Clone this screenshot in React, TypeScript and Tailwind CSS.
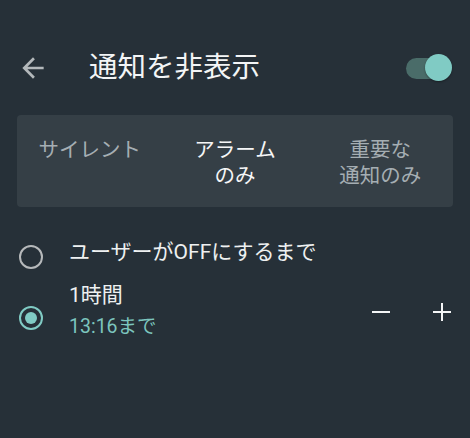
import React from "react";

const font = { fontFamily: "Roboto, 'Noto Sans CJK JP', sans-serif" };

function BackArrow() {
  return (
    <svg width="32" height="32" viewBox="0 0 24 24" fill="#b3b8bb">
      <path d="M20 11H7.83l5.59-5.59L12 4l-8 8 8 8 1.41-1.41L7.83 13H20v-2z" />
    </svg>
  );
}

function Toggle() {
  return (
    <div className="relative w-[46px] h-[28px] flex items-center">
      <div className="h-[21px] w-[38px] rounded-full bg-[#4a6c69]" />
      <div className="absolute right-0 top-0 w-[27px] h-[27px] rounded-full bg-[#80cbc4] shadow-[0_1px_2px_rgba(0,0,0,0.35)]" />
    </div>
  );
}

function Radio({ checked }: { checked?: boolean }) {
  return checked ? (
    <div className="w-[24px] h-[24px] rounded-full border-[2.5px] border-[#80cbc4] flex items-center justify-center">
      <div className="w-[12px] h-[12px] rounded-full bg-[#80cbc4]" />
    </div>
  ) : (
    <div className="w-[24px] h-[24px] rounded-full border-[2.5px] border-[#b6b9bb]" />
  );
}

export default function App() {
  const tabs = [
    { label: ["サイレント"], active: false },
    { label: ["アラーム", "のみ"], active: true },
    { label: ["重要な", "通知のみ"], active: false },
  ];

  return (
    <div className="w-[470px] h-[438px] bg-[#263038] overflow-hidden" style={font}>
      {/* Header */}
      <div className="mt-[40px] h-[56px] flex items-center">
        <div className="ml-[17px]">
          <BackArrow />
        </div>
        <h1 className="ml-[40px] text-[28.5px] leading-[36px] text-[#f3f5f6] font-normal">通知を非表示</h1>
        <div className="ml-auto mr-[18px]">
          <Toggle />
        </div>
      </div>

      {/* Mode tabs */}
      <div className="mx-[17px] mt-[19px] h-[92px] rounded-[4px] bg-[#353f46] grid grid-cols-3 pt-[22px]">
        {tabs.map((t) => (
          <div
            key={t.label.join("")}
            className={`text-center text-[20.5px] leading-[26px] ${t.active ? "text-[#f5f6f7]" : "text-[#a5aeb3]"}`}
          >
            {t.label.map((l) => (
              <div key={l}>{l}</div>
            ))}
          </div>
        ))}
      </div>

      {/* Duration options */}
      <div className="mt-[31px] flex items-start">
        <div className="ml-[19px] mt-[7px]">
          <Radio />
        </div>
        <div className="ml-[26px] text-[21px] leading-[28px] text-[#eef0f1]">ユーザーがOFFにするまで</div>
      </div>

      <div className="mt-[12px] flex items-start">
        <div className="ml-[19px] mt-[25px]">
          <Radio checked />
        </div>
        <div className="ml-[26px]">
          <div className="text-[21px] leading-[28px] text-[#eef0f1]">1時間</div>
          <div className="mt-[5px] text-[19.5px] leading-[26px] text-[#7cc5be]">13:16まで</div>
        </div>
        <div className="ml-auto mr-[19px] mt-[22px] flex items-center gap-[43px]">
          <svg width="18" height="18" viewBox="0 0 18 18">
            <path d="M0 9h18" stroke="#f3f5f6" strokeWidth="2" />
          </svg>
          <svg width="18" height="18" viewBox="0 0 18 18">
            <path d="M0 9h18M9 0v18" stroke="#f3f5f6" strokeWidth="2" />
          </svg>
        </div>
      </div>
    </div>
  );
}
